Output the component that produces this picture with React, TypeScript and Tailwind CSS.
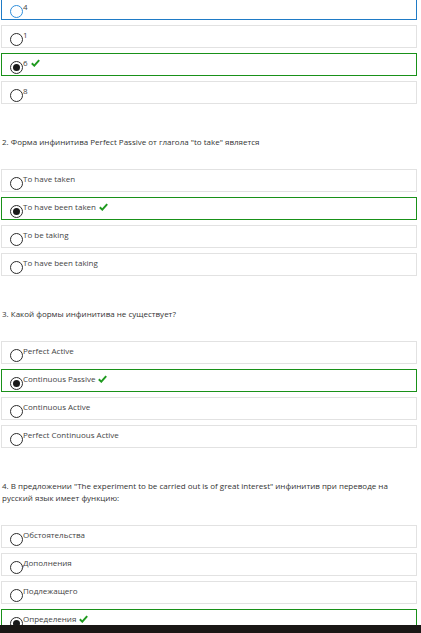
import React from 'react'

type Option = { label: string; checked?: boolean; correct?: boolean; focus?: boolean }
type Question = { title?: string; options: Option[] }

const questions: Question[] = [
  {
    options: [
      { label: '4', focus: true },
      { label: '1' },
      { label: '6', checked: true, correct: true },
      { label: '8' },
    ],
  },
  {
    title: '2. Форма инфинитива Perfect Passive от глагола "to take" является',
    options: [
      { label: 'To have taken' },
      { label: 'To have been taken', checked: true, correct: true },
      { label: 'To be taking' },
      { label: 'To have been taking' },
    ],
  },
  {
    title: '3. Какой формы инфинитива не существует?',
    options: [
      { label: 'Perfect Active' },
      { label: 'Continuous Passive', checked: true, correct: true },
      { label: 'Continuous Active' },
      { label: 'Perfect Continuous Active' },
    ],
  },
  {
    title:
      '4. В предложении "The experiment to be carried out is of great interest" инфинитив при переводе на русский язык имеет функцию:',
    options: [
      { label: 'Обстоятельства' },
      { label: 'Дополнения' },
      { label: 'Подлежащего' },
      { label: 'Определения', checked: true, correct: true },
    ],
  },
]

function Radio({ checked, focus }: { checked?: boolean; focus?: boolean }) {
  return (
    <span
      className={`mt-[4px] flex h-[13px] w-[13px] shrink-0 items-center justify-center rounded-full border-[1.5px] bg-white ${
        focus ? 'border-[#2f8fdc]' : 'border-[#2b2b2b]'
      }`}
    >
      {checked && <span className="h-[7px] w-[7px] rounded-full bg-[#1a1a1a]" />}
    </span>
  )
}

function Tick() {
  return (
    <svg width="9" height="8" viewBox="0 0 9 8" className="ml-[3px] mt-[2px] shrink-0">
      <path d="M0.8 4.2 L3.3 6.6 L8.2 1.2" fill="none" stroke="#1f9a1f" strokeWidth="2" />
    </svg>
  )
}

function OptionRow({ option }: { option: Option }) {
  const border = option.focus
    ? 'border-[#1f7bc6]'
    : option.correct
      ? 'border-[#199119]'
      : 'border-[#e2e2e2]'
  return (
    <div className={`ml-[1px] flex h-[23px] w-[416px] items-start border pl-[8px] pt-[3px] ${border}`}>
      <Radio checked={option.checked} focus={option.focus} />
      <span className="text-[8px] leading-[12px] text-[#444]">{option.label}</span>
      {option.correct && <Tick />}
    </div>
  )
}

export default function App() {
  return (
    <div className="h-[633px] overflow-hidden bg-white font-['Open_Sans',sans-serif]">
      <div className="h-[625px] overflow-hidden">
        <div className="-mt-[3px]">
          {questions.map((q, i) => (
            <div key={i} className={i > 0 ? 'mt-[32px]' : ''}>
              {q.title && (
                <p className="mb-[21px] pl-[2px] pr-[30px] text-[8px] leading-[12px] text-[#333]">{q.title}</p>
              )}
              <div className="flex flex-col gap-[5px]">
                {q.options.map((o) => (
                  <OptionRow key={o.label} option={o} />
                ))}
              </div>
            </div>
          ))}
        </div>
      </div>
      <div className="h-[8px] bg-[#1a1715]" />
    </div>
  )
}
